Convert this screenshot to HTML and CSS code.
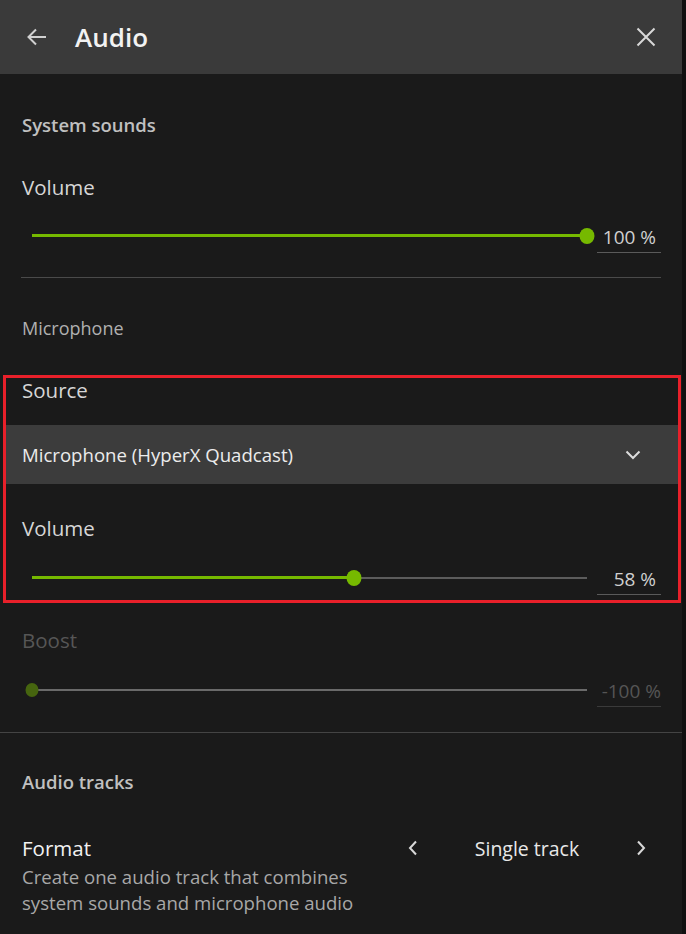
FILE: index.html
```html
<!DOCTYPE html>
<html lang="en">
<head>
    <meta charset="UTF-8">
    <meta name="viewport" content="width=device-width, initial-scale=1.0">
    <title>Audio</title>
    <link rel="stylesheet" href="styles.css">
</head>
<body>
    <div class="panel">
        <header class="topbar">
            <button class="icon-btn back" aria-label="Back">
                <svg width="24" height="24" viewBox="0 0 24 24"><path d="M21 12H3.5M11 4.5L3.5 12l7.5 7.5" fill="none" stroke="#d0d0d0" stroke-width="2"/></svg>
            </button>
            <h1>Audio</h1>
            <button class="icon-btn close" aria-label="Close">
                <svg width="20" height="20" viewBox="0 0 20 20"><path d="M1.5 1.5l17 17M18.5 1.5l-17 17" fill="none" stroke="#d8d8d8" stroke-width="2"/></svg>
            </button>
        </header>

        <div class="content">
            <div class="section-title">System sounds</div>
            <div class="label gap-37">Volume</div>
            <div class="slider-row gap-18">
                <div class="track">
                    <div class="fill" style="width: 100%"></div>
                    <div class="thumb" style="left: 100%"></div>
                </div>
                <div class="value">100 %</div>
            </div>

            <hr class="divider inset">

            <div class="section-title plain gap-38">Microphone</div>

            <div class="highlight gap-37">
                <div class="label">Source</div>
                <div class="dropdown">
                    <span>Microphone (HyperX Quadcast)</span>
                    <svg width="16" height="10" viewBox="0 0 16 10"><path d="M1.5 1.5L8 8l6.5-6.5" fill="none" stroke="#dcdcdc" stroke-width="2"/></svg>
                </div>
                <div class="label gap-31">Volume</div>
                <div class="slider-row gap-19">
                    <div class="track">
                        <div class="fill" style="width: 58%"></div>
                        <div class="thumb" style="left: 58%"></div>
                    </div>
                    <div class="value">58 %</div>
                </div>
            </div>

            <div class="label disabled gap-32">Boost</div>
            <div class="slider-row disabled gap-19">
                <div class="track">
                    <div class="fill" style="width: 0%"></div>
                    <div class="thumb" style="left: 0%"></div>
                </div>
                <div class="value">-100 %</div>
            </div>

            <hr class="divider full">

            <div class="section-title gap-37">Audio tracks</div>

            <div class="format-row">
                <div class="format-info">
                    <div class="label bright">Format</div>
                    <p class="desc">Create one audio track that combines system sounds and microphone audio</p>
                </div>
                <div class="stepper">
                    <svg width="10" height="16" viewBox="0 0 10 16"><path d="M8 1.5L2 8l6 6.5" fill="none" stroke="#d8d8d8" stroke-width="2"/></svg>
                    <span>Single track</span>
                    <svg width="10" height="16" viewBox="0 0 10 16"><path d="M2 1.5L8 8l-6 6.5" fill="none" stroke="#d8d8d8" stroke-width="2"/></svg>
                </div>
            </div>
        </div>
    </div>
</body>
</html>
```

FILE: styles.css
```css
body {
    margin: 0;
    background: #101010;
    font-family: 'Open Sans', 'Liberation Sans', sans-serif;
    color: #d8d8d8;
}

.panel {
    width: 682px;
    height: 934px;
    background: #1a1a1a;
    overflow: hidden;
}

.topbar {
    height: 74px;
    background: #3a3a3a;
    display: flex;
    align-items: center;
    padding: 0 26px 0 25px;
    box-sizing: border-box;
}

.topbar h1 {
    margin: 0 0 0 26px;
    font-size: 26px;
    font-weight: 600;
    color: #f2f2f2;
    flex: 1;
}

.icon-btn {
    background: none;
    border: none;
    padding: 0;
    display: flex;
    cursor: pointer;
}

.content {
    padding-top: 39px;
}

.section-title {
    padding: 0 22px;
    font-size: 18.5px;
    line-height: 24px;
    font-weight: 600;
    color: #c0c0c0;
}

.section-title.plain {
    font-size: 18px;
    font-weight: 400;
    color: #b0b0b0;
}

.label {
    padding: 0 22px;
    font-size: 20.5px;
    line-height: 26px;
    color: #d6d6d6;
}

.label.disabled {
    color: #565656;
}

.label.bright {
    padding: 0;
    color: #f2f2f2;
}

.gap-18 { margin-top: 18px; }
.gap-19 { margin-top: 19px; }
.gap-31 { margin-top: 31px; }
.gap-32 { margin-top: 32px; }
.gap-37 { margin-top: 37px; }
.gap-38 { margin-top: 38px; }

.slider-row {
    display: flex;
    align-items: center;
    height: 35px;
    padding: 0 21px 0 32px;
}

.track {
    flex: 1;
    position: relative;
    height: 2px;
    background: #5c5c5c;
    margin-right: 10px;
}

.fill {
    height: 3px;
    margin-top: -0.5px;
    background: #76b900;
}

.thumb {
    position: absolute;
    top: 50%;
    width: 15px;
    height: 16px;
    border-radius: 50%;
    background: #76b900;
    transform: translate(-50%, -50%);
}

.value {
    width: 64px;
    height: 34px;
    line-height: 36px;
    border-bottom: 1px solid #5a5a5a;
    text-align: right;
    padding-right: 5px;
    box-sizing: border-box;
    font-size: 19px;
    color: #d0d0d0;
    white-space: nowrap;
}

.slider-row.disabled .track {
    background: #6a6a6a;
}

.slider-row.disabled .thumb {
    background: #46650f;
    width: 13px;
    height: 14px;
}

.slider-row.disabled .value {
    color: #555;
    border-bottom-color: #3a3a3a;
    padding-right: 0;
}

.divider {
    border: none;
    height: 1px;
    margin: 24px 0 0;
    background: #4a4a4a;
}

.divider.inset {
    margin-left: 21px;
    margin-right: 21px;
}

.divider.full {
    margin-top: 25px;
    background: #444;
}

.highlight {
    position: relative;
}

.highlight::after {
    content: '';
    position: absolute;
    top: -2px;
    left: 3px;
    right: 1px;
    bottom: -8px;
    border: 3px solid #e8202a;
    pointer-events: none;
}

.dropdown {
    margin: 22px 4px 0;
    height: 59px;
    background: #3c3c3c;
    display: flex;
    align-items: center;
    justify-content: space-between;
    padding: 0 37px 0 18px;
    font-size: 18.6px;
    color: #ececec;
}

.format-row {
    display: flex;
    justify-content: space-between;
    align-items: flex-start;
    padding: 0 36px 0 22px;
    margin-top: 41px;
}

.desc {
    margin: 3px 0 0;
    width: 360px;
    font-size: 18.6px;
    line-height: 26px;
    color: #a8a8a8;
}

.stepper {
    display: flex;
    align-items: center;
    height: 26px;
    width: 238px;
    justify-content: space-between;
    font-size: 19.5px;
    color: #e8e8e8;
}
```
